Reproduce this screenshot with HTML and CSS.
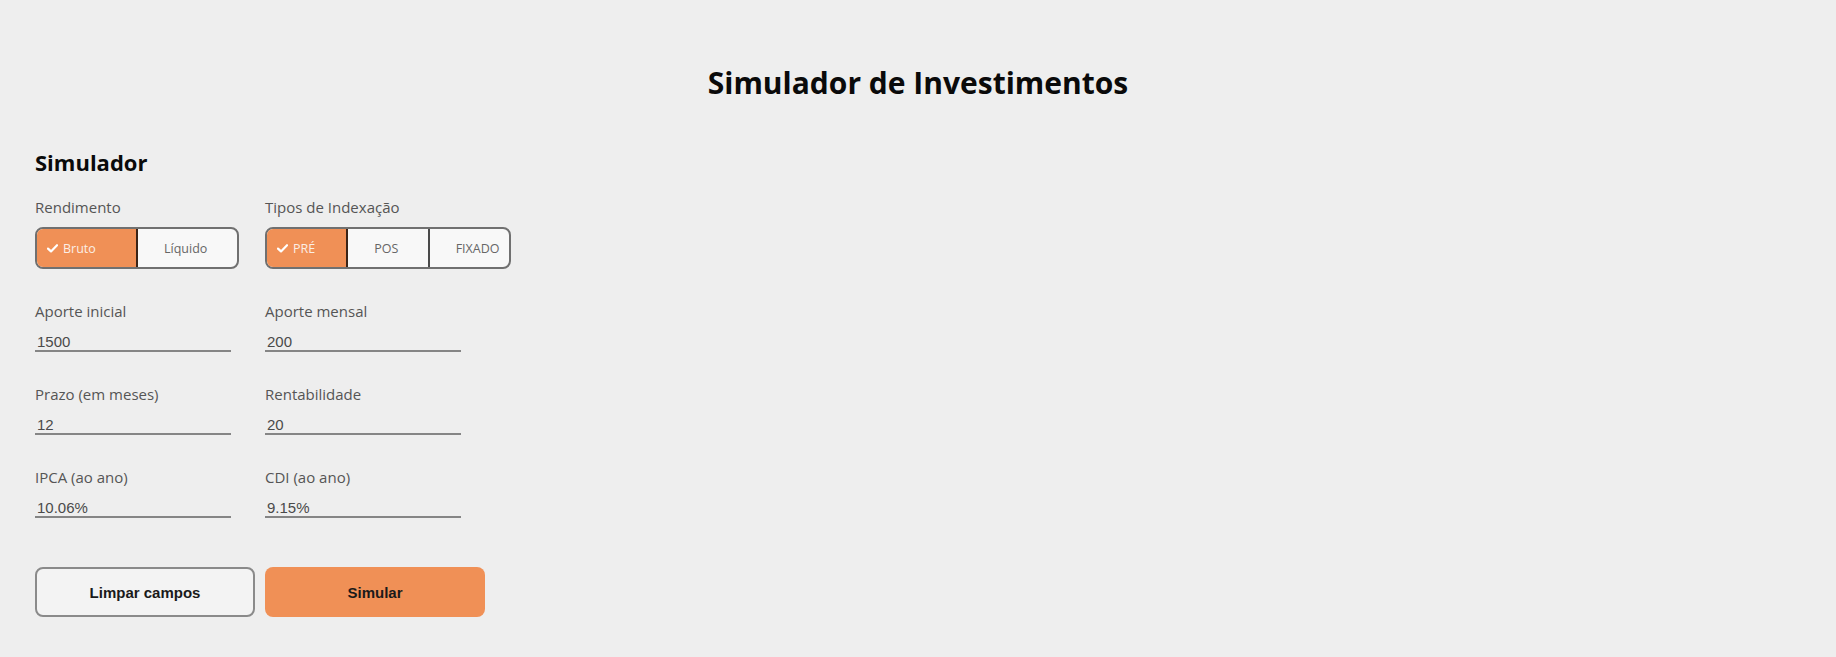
FILE: index.html
```html
<!DOCTYPE html>
<html lang="pt-BR">
<head>
<meta charset="utf-8">
<title>Simulador de Investimentos</title>
<link rel="stylesheet" href="styles.css">
</head>
<body>
<main class="page">
  <h1 class="title">Simulador de Investimentos</h1>
  <section class="sim">
    <h2 class="sim-title">Simulador</h2>
    <div class="grid">
      <div class="field">
        <span class="label">Rendimento</span>
        <div class="toggle toggle-2">
          <button class="seg active"><svg class="check" viewBox="0 0 11 9" width="11" height="9"><path d="M1 4.6 L4 7.4 L10 1.2" fill="none" stroke="currentColor" stroke-width="2.2" stroke-linecap="round" stroke-linejoin="round"/></svg><span>Bruto</span></button>
          <button class="seg"><svg class="check" viewBox="0 0 11 9" width="11" height="9"><path d="M1 4.6 L4 7.4 L10 1.2" fill="none" stroke="currentColor" stroke-width="2.2" stroke-linecap="round" stroke-linejoin="round"/></svg><span>Líquido</span></button>
        </div>
      </div>
      <div class="field">
        <span class="label">Tipos de Indexação</span>
        <div class="toggle toggle-3">
          <button class="seg active"><svg class="check" viewBox="0 0 11 9" width="11" height="9"><path d="M1 4.6 L4 7.4 L10 1.2" fill="none" stroke="currentColor" stroke-width="2.2" stroke-linecap="round" stroke-linejoin="round"/></svg><span>PRÉ</span></button>
          <button class="seg"><svg class="check" viewBox="0 0 11 9" width="11" height="9"><path d="M1 4.6 L4 7.4 L10 1.2" fill="none" stroke="currentColor" stroke-width="2.2" stroke-linecap="round" stroke-linejoin="round"/></svg><span>POS</span></button>
          <button class="seg"><svg class="check" viewBox="0 0 11 9" width="11" height="9"><path d="M1 4.6 L4 7.4 L10 1.2" fill="none" stroke="currentColor" stroke-width="2.2" stroke-linecap="round" stroke-linejoin="round"/></svg><span>FIXADO</span></button>
        </div>
      </div>

      <label class="field">
        <span class="label">Aporte inicial</span>
        <input class="input" type="text" value="1500">
      </label>
      <label class="field">
        <span class="label">Aporte mensal</span>
        <input class="input" type="text" value="200">
      </label>

      <label class="field">
        <span class="label">Prazo (em meses)</span>
        <input class="input" type="text" value="12">
      </label>
      <label class="field">
        <span class="label">Rentabilidade</span>
        <input class="input" type="text" value="20">
      </label>

      <label class="field">
        <span class="label">IPCA (ao ano)</span>
        <input class="input" type="text" value="10.06%">
      </label>
      <label class="field">
        <span class="label">CDI (ao ano)</span>
        <input class="input" type="text" value="9.15%">
      </label>
    </div>
    <div class="actions">
      <button class="btn btn-outline">Limpar campos</button>
      <button class="btn btn-primary">Simular</button>
    </div>
  </section>
</main>
</body>
</html>
```

FILE: styles.css
```css
html, body {
  margin: 0;
  padding: 0;
  background: #eeeeee;
}

body {
  font-family: "Open Sans", "Noto Sans", sans-serif;
  color: #111;
}

.page {
  padding: 65px 35px 40px 35px;
}

.title {
  margin: 0;
  text-align: center;
  font-size: 30px;
  line-height: 36px;
  font-weight: 700;
  color: #0a0a0a;
}

.sim {
  margin-top: 47px;
}

.sim-title {
  margin: 0;
  font-size: 22px;
  line-height: 28px;
  font-weight: 700;
  color: #0a0a0a;
}

.grid {
  margin-top: 21px;
  display: grid;
  grid-template-columns: 230px 246px;
  row-gap: 32px;
}

.field {
  display: flex;
  flex-direction: column;
}

.label {
  font-size: 15px;
  line-height: 20px;
  color: #555;
}

.toggle {
  margin-top: 10px;
  display: flex;
  height: 42px;
  box-sizing: border-box;
  border: 2px solid #707070;
  border-radius: 8px;
  overflow: hidden;
  background: #f8f8f8;
}

.toggle-2 { width: 204px; }
.toggle-3 { width: 246px; }

.seg {
  flex: 1;
  display: flex;
  align-items: center;
  gap: 4px;
  padding: 0 0 0 10px;
  margin: 0;
  border: none;
  border-left: 2px solid #4a4a4a;
  background: transparent;
  font-family: "Open Sans", "Noto Sans", sans-serif;
  font-size: 12.5px;
  color: #666;
  cursor: pointer;
}

.seg:first-child {
  border-left: none;
}

.seg .check {
  flex: none;
  visibility: hidden;
}

.seg span {
  margin-left: 1px;
}

.seg.active {
  background: #f09056;
  color: #fbeee5;
}

.seg.active + .seg {
  border-left-color: #3a2418;
}

.seg.active .check {
  visibility: visible;
  color: #ffffff;
}

.input {
  margin-top: 11px;
  width: 196px;
  box-sizing: border-box;
  height: 20px;
  padding: 0 2px;
  border: none;
  border-bottom: 2px solid #858585;
  background: transparent;
  font-family: "Liberation Sans", Arial, sans-serif;
  font-size: 15px;
  line-height: 18px;
  color: #4a4a4a;
  outline: none;
}

.actions {
  margin-top: 49px;
  display: flex;
  gap: 10px;
}

.btn {
  width: 220px;
  height: 50px;
  box-sizing: border-box;
  border-radius: 8px;
  font-family: "Liberation Sans", Arial, sans-serif;
  font-size: 15px;
  font-weight: 700;
  color: #1a1a1a;
  cursor: pointer;
}

.btn-outline {
  background: #f3f3f3;
  border: 2px solid #8a8a8a;
}

.btn-primary {
  background: #f09056;
  border: none;
}
```
